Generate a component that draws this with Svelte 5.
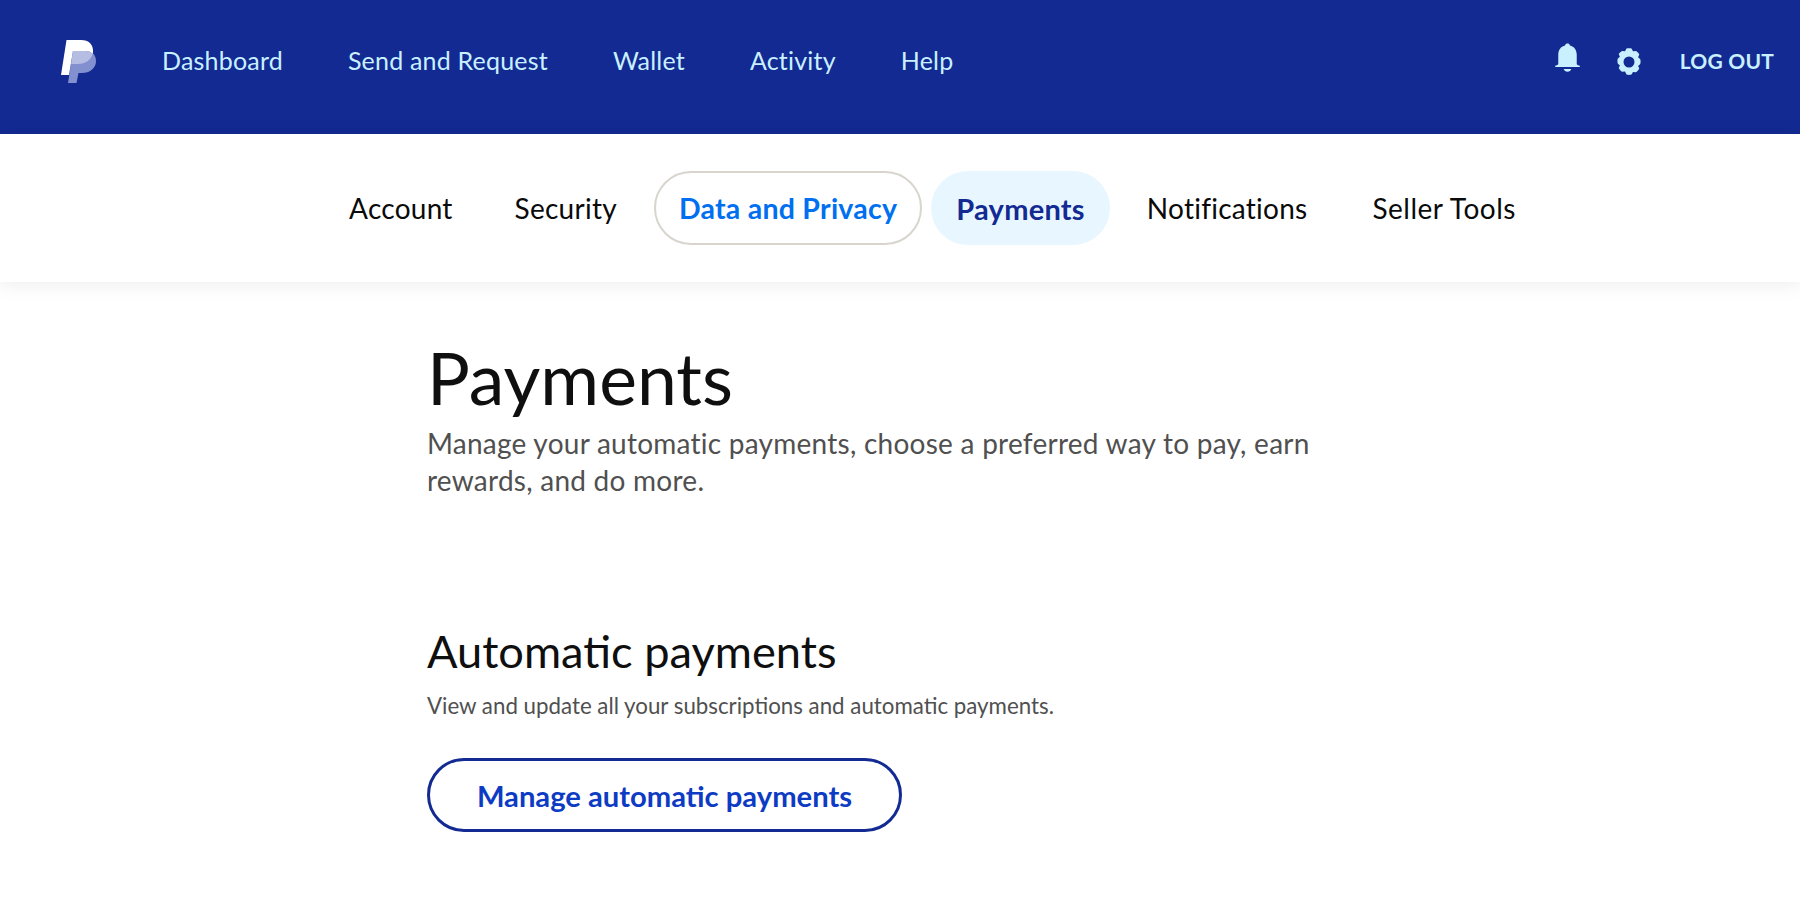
<script lang="ts">
  const mainLinks = ["Dashboard", "Send and Request", "Wallet", "Activity", "Help"];
  const tabs = [
    { label: "Account" },
    { label: "Security" },
    { label: "Data and Privacy", state: "focus" },
    { label: "Payments", state: "active" },
    { label: "Notifications" },
    { label: "Seller Tools" },
  ];
</script>

<header class="topbar">
  <svg class="logo" viewBox="0 0 36 44" width="36" height="44" aria-label="PayPal">
    <path d="M12 11h12c7 0 11 3.500 11 10 0 7.500-6.500 12-14 12h-3.500L15.500 43H7z" fill="#8390d0" />
    <path d="M5.500 0H20c8 0 12.500 4.500 12 12-.1.800-.2 1.500-.4 2.100C30 12 27.500 11 24 11H12L8 35H0z" fill="#fff" />
    <path d="M12 11h12c3.500 0 6 1 7.600 3.100C30 20 24.500 24 17 24h-5l-1.800 0z" fill="#b6bde3" />
  </svg>
  <nav class="main-links">
    {#each mainLinks as link}
      <span>{link}</span>
    {/each}
  </nav>
  <div class="tools">
    <svg class="bell" viewBox="0 0 26 30" width="25" height="30" aria-label="Notifications">
      <path d="M13 0c1.300 0 2.200.7 2.500 1.900C20 3 22.600 6.500 22.600 11.500v9.300c0 1 .8 1.800 2.400 1.900.7.100 1 .4 1 .8s-.3.800-1 .8H1c-.7 0-1-.4-1-.8s.3-.7 1-.8c1.600-.1 2.400-.9 2.400-1.900v-9.300C3.400 6.500 6 3 10.500 1.900 10.800.7 11.700 0 13 0z" fill="#c9f0ff" />
      <path d="M9 26.500h8c-.5 1.700-2.100 2.700-4 2.700s-3.500-1-4-2.700z" fill="#c9f0ff" />
    </svg>
    <svg class="gear" viewBox="0 0 28 28" width="28" height="28" aria-label="Settings">
      <path fill-rule="evenodd" fill="#c9f0ff" d="M11.500.6c1.700-.5 3.300-.5 5 0l1.500 2.700 3-.3c1.400.8 2.600 2.100 3.300 3.600l-1.200 2.700 2.200 2c.4 1.500.4 3.100 0 4.600l-2.200 2 1.200 2.700c-.7 1.500-1.900 2.800-3.300 3.600l-3-.3-1.500 2.700c-1.700.5-3.300.5-5 0L10 23.400l-3 .3c-1.400-.8-2.600-2.100-3.300-3.600l1.200-2.700-2.200-2c-.4-1.500-.4-3.100 0-4.600l2.200-2-1.200-2.700C4.400 5.100 5.600 3.800 7 3l3 .3zM14 8.500a5.500 5.500 0 1 0 0 11 5.500 5.500 0 0 0 0-11z" />
    </svg>
    <span class="logout">LOG OUT</span>
  </div>
</header>

<nav class="tabs">
  {#each tabs as tab}
    <span class="tab {tab.state ?? ''}">{tab.label}</span>
  {/each}
</nav>

<main class="content">
  <h1>Payments</h1>
  <p class="lead">Manage your automatic payments, choose a preferred way to pay, earn rewards, and do more.</p>

  <section class="section">
    <h2>Automatic payments</h2>
    <p class="hint">View and update all your subscriptions and automatic payments.</p>
    <button type="button" class="outline">Manage automatic payments</button>
  </section>
</main>

<style>
  :global(body) {
    background: #fff;
    font-family: Lato, "Open Sans", sans-serif;
    height: 900px;
    overflow: hidden;
  }

  .topbar {
    align-items: center;
    background: #122a92;
    box-sizing: border-box;
    color: #c9f0ff;
    display: flex;
    height: 134px;
    padding: 0 26px 14px 61px;
  }

  .logo {
    margin-right: 65px;
    margin-top: 3px;
  }

  .main-links {
    display: flex;
    font-size: 25px;
    gap: 65px;
    letter-spacing: 0.2px;
  }

  .tools {
    align-items: center;
    display: flex;
    margin-left: auto;
  }

  .bell {
    margin-bottom: 4px;
  }

  .gear {
    margin-left: 35px;
    margin-top: 4px;
  }

  .logout {
    font-size: 21px;
    font-weight: 700;
    letter-spacing: 0.2px;
    margin-left: 37px;
  }

  .tabs {
    align-items: center;
    background: #fff;
    box-shadow: 0 2px 20px rgba(0, 0, 0, 0.08);
    display: flex;
    gap: 9px;
    height: 148px;
    justify-content: center;
    padding-left: 65px;
    position: relative;
  }

  .tab {
    align-items: center;
    border: 2px solid transparent;
    border-radius: 37px;
    box-sizing: border-box;
    color: #0a0a0a;
    display: flex;
    font-size: 28px;
    height: 74px;
    letter-spacing: 0.25px;
    padding: 0 26px;
  }

  .tab:first-child {
    padding-right: 23px;
  }

  .tab:last-child {
    letter-spacing: 0.5px;
  }

  .tab.focus {
    border-color: #d8d5ce;
    color: #0070f0;
    font-size: 28.500px;
    font-weight: 700;
    padding: 0 23px;
  }

  .tab.active {
    background: #e8f7ff;
    color: #122a92;
    font-size: 29px;
    font-weight: 700;
    padding: 0 23px;
  }

  .content {
    padding: 53px 0 0 427px;
    width: 900px;
  }

  h1 {
    color: #0f0f0f;
    font-size: 71.500px;
    font-weight: 400;
    line-height: 84px;
    margin: 0 0 6px;
  }

  .lead {
    color: #505050;
    font-size: 28px;
    letter-spacing: 0.25px;
    line-height: 37px;
    margin: 0;
  }

  .section {
    margin-top: 127px;
  }

  h2 {
    color: #0f0f0f;
    font-size: 45.200px;
    font-weight: 400;
    line-height: 50px;
    margin: 0;
  }

  .hint {
    color: #505050;
    font-size: 22.300px;
    line-height: 28px;
    margin: 16px 0 38px;
  }

  .outline {
    background: #fff;
    border: 3px solid #122a92;
    border-radius: 37px;
    box-sizing: border-box;
    color: #0e3bc4;
    font-family: inherit;
    font-size: 29.200px;
    font-weight: 700;
    height: 74px;
    padding: 0;
    width: 475px;
  }
</style>
